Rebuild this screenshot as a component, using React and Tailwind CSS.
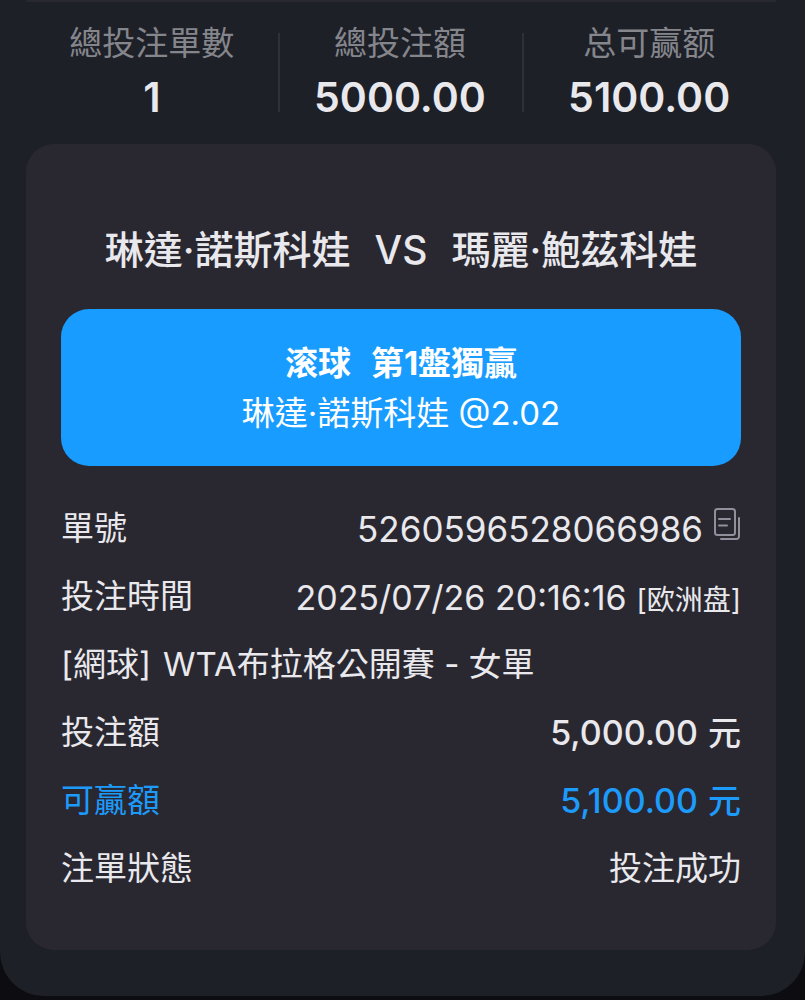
import React from "react";

const stats = [
  { label: "總投注單數", value: "1" },
  { label: "總投注額", value: "5000.00" },
  { label: "总可赢额", value: "5100.00" },
];

const CopyIcon = () => (
  <svg
    className="h-8 w-7"
    viewBox="0 0 28 32"
    fill="none"
    stroke="currentColor"
    strokeWidth="2"
    strokeLinecap="round"
    strokeLinejoin="round"
    aria-hidden="true"
  >
    <rect x="2" y="1" width="20" height="26" rx="2.5" />
    <path d="M6 11h11M6 17.5h8" />
    <path d="M26 10v18.5a2.5 2.5 0 0 1-2.5 2.5H8" />
  </svg>
);

const Row = ({ label, children, className = "" }) => (
  <div className={`flex h-[68px] items-center justify-between ${className}`}>
    <dt>{label}</dt>
    <dd className="flex items-center">{children}</dd>
  </div>
);

const Amount = ({ value }) => (
  <span className="flex items-baseline gap-[10px] font-medium">
    <span className="text-[34px]">{value}</span>
    <span>元</span>
  </span>
);

const App = () => {
  const orderNo = "5260596528066986";

  const handleCopy = () => {
    navigator.clipboard?.writeText(orderNo);
  };

  return (
    <div className="min-h-screen bg-[#0d0d11] font-[Inter,'Noto_Sans_CJK_TC',sans-serif] text-[#e9e9ed]">
      <main className="rounded-b-[44px] bg-[#1e2028] pr-[29px] pb-[46px] pl-[26px]">
        {/* Totals */}
        <section className="grid grid-cols-[252fr_245fr_254fr] border-t-2 border-[#282830] pt-[17px] pb-4 text-center">
          {stats.map((stat, index) => (
            <div key={stat.label} className="relative">
              <p className="text-[33px] leading-[48px] text-[#85868c]">
                {stat.label}
              </p>
              <p className="text-[41px] leading-[61px] font-semibold">
                {stat.value}
              </p>
              {index > 0 && (
                <span className="absolute top-[14px] bottom-4 left-0 w-0.5 bg-[#2f3039]" />
              )}
            </div>
          ))}
        </section>

        {/* Bet Card */}
        <section className="rounded-[28px] bg-[#292831] px-[35px] pt-[76px] pb-[47px] text-[33px]">
          <h1 className="flex justify-center gap-6 text-[39px] leading-[60px] font-medium">
            <span>琳達·諾斯科娃</span>
            <span>VS</span>
            <span>瑪麗·鮑茲科娃</span>
          </h1>

          <div className="mt-[29px] rounded-[28px] bg-[#189cff] pt-[29px] pb-7 text-center leading-[50px] text-white">
            <p className="flex justify-center gap-5 font-bold">
              <span>滚球</span>
              <span>第1盤獨贏</span>
            </p>
            <p>琳達·諾斯科娃 @2.02</p>
          </div>

          <dl className="mt-[29px]">
            <Row label="單號">
              <span className="text-[35px]">{orderNo}</span>
              <button
                type="button"
                aria-label="複製單號"
                onClick={handleCopy}
                className="mb-2.5 ml-2.5 text-[#8f909b]"
              >
                <CopyIcon />
              </button>
            </Row>
            <Row label="投注時間">
              <span className="flex items-baseline gap-[10px]">
                <span className="text-[34px]">2025/07/26 20:16:16</span>
                <span className="text-[28px]">[欧洲盘]</span>
              </span>
            </Row>
            <Row
              label={
                <span className="flex gap-3">
                  <span>[網球]</span>
                  <span>WTA布拉格公開賽 - 女單</span>
                </span>
              }
            />
            <Row label="投注額">
              <Amount value="5,000.00" />
            </Row>
            <Row label="可贏額" className="text-[#1d9bfb]">
              <Amount value="5,100.00" />
            </Row>
            <Row label="注單狀態">投注成功</Row>
          </dl>
        </section>
      </main>
    </div>
  );
};

export default App;
